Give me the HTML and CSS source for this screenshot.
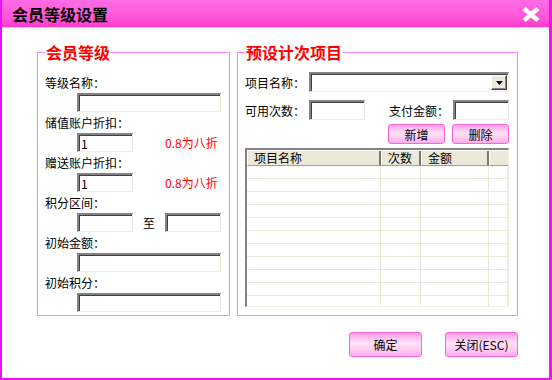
FILE: index.html
```html
<!DOCTYPE html>
<html lang="zh">
<head>
  <meta charset="UTF-8" />
  <title>会员等级设置</title>
  <link rel="stylesheet" href="styles.css">
</head>
<body>
  <div class="window">
    <div class="titlebar">
      <span class="title">会员等级设置</span>
      <svg class="close" viewBox="0 0 18 15"><path d="M2 1.5 L16 13.5 M16 1.5 L2 13.5"/></svg>
    </div>

    <div class="content">
      <div class="groups">
        <fieldset class="group group-level">
          <legend>会员等级</legend>
          <div class="lbl">等级名称：</div>
          <div class="row"><input class="inp inp-wide"></div>
          <div class="lbl">储值账户折扣：</div>
          <div class="row"><input class="inp inp-short" value="1"><span class="hint">0.8为八折</span></div>
          <div class="lbl">赠送账户折扣：</div>
          <div class="row"><input class="inp inp-short" value="1"><span class="hint">0.8为八折</span></div>
          <div class="lbl">积分区间：</div>
          <div class="row"><input class="inp inp-short"><span class="to">至</span><input class="inp inp-short"></div>
          <div class="lbl">初始金额：</div>
          <div class="row"><input class="inp inp-wide"></div>
          <div class="lbl">初始积分：</div>
          <div class="row"><input class="inp inp-wide"></div>
        </fieldset>

        <fieldset class="group group-items">
          <legend>预设计次项目</legend>
          <div class="line">
            <span class="key">项目名称：</span>
            <div class="select"><span class="drop"><svg viewBox="0 0 7 4"><path d="M0 0h7L3.5 4z"/></svg></span></div>
          </div>
          <div class="line line-2">
            <span class="key">可用次数：</span>
            <input class="inp inp-num">
            <span class="key key-pay">支付金额：</span>
            <input class="inp inp-num">
          </div>
          <div class="line line-btns">
            <button class="pbtn small">新增</button>
            <button class="pbtn small">删除</button>
          </div>
          <div class="grid">
            <div class="grid-head">
              <span class="c1">项目名称</span><span class="c2">次数</span><span class="c3">金额</span><span class="c4"></span>
            </div>
            <div class="grid-row"><span class="c1"></span><span class="c2"></span><span class="c3"></span><span class="c4"></span></div>
            <div class="grid-row"><span class="c1"></span><span class="c2"></span><span class="c3"></span><span class="c4"></span></div>
            <div class="grid-row"><span class="c1"></span><span class="c2"></span><span class="c3"></span><span class="c4"></span></div>
            <div class="grid-row"><span class="c1"></span><span class="c2"></span><span class="c3"></span><span class="c4"></span></div>
            <div class="grid-row"><span class="c1"></span><span class="c2"></span><span class="c3"></span><span class="c4"></span></div>
            <div class="grid-row"><span class="c1"></span><span class="c2"></span><span class="c3"></span><span class="c4"></span></div>
            <div class="grid-row"><span class="c1"></span><span class="c2"></span><span class="c3"></span><span class="c4"></span></div>
            <div class="grid-row"><span class="c1"></span><span class="c2"></span><span class="c3"></span><span class="c4"></span></div>
            <div class="grid-row"><span class="c1"></span><span class="c2"></span><span class="c3"></span><span class="c4"></span></div>
            <div class="grid-row"><span class="c1"></span><span class="c2"></span><span class="c3"></span><span class="c4"></span></div>
            <div class="grid-row"><span class="c1"></span><span class="c2"></span><span class="c3"></span><span class="c4"></span></div>
          </div>
        </fieldset>
      </div>

      <div class="actions">
        <button class="pbtn big">确定</button>
        <button class="pbtn big">关闭(ESC)</button>
      </div>
    </div>
  </div>
</body>
</html>
```

FILE: styles.css
```css
:root {
  --frame: #f010f8;
  --group-border: #ff80ff;
  --face: #ece9d8;
  --shadow: #848284;
  --dark: #404040;
}

body {
  margin: 0;
  font-family: "Noto Sans CJK TC", "Noto Sans CJK SC", "DejaVu Sans", sans-serif;
  font-size: 12px;
  color: #000;
  background: #fff;
}

.window {
  width: 552px;
  height: 380px;
  box-sizing: border-box;
  border-left: 2px solid var(--frame);
  border-right: 3px solid var(--frame);
  border-bottom: 2px solid var(--frame);
  background: #fff;
}

/* Title bar */
.titlebar {
  height: 27px;
  border-bottom: 1px solid #e8d4e4;
  background: linear-gradient(#ff6ce6, #ff58da 60%, #ff3ccc);
  display: flex;
  align-items: center;
  justify-content: space-between;
  padding: 0 9px 0 10px;
}

.title {
  font-size: 16px;
  font-weight: 700;
  line-height: 16px;
}

.close {
  width: 18px;
  height: 15px;
  margin-top: 1px;
}

.close path {
  stroke: #fff;
  stroke-width: 4.4;
  fill: none;
}

/* Body */
.content {
  padding: 16px 0 0 35px;
}

.groups {
  display: flex;
  gap: 7px;
  align-items: flex-start;
}

.group {
  margin: 0;
  border: 1px solid var(--group-border);
  padding: 12px 8px 4px 7px;
  min-width: 0;
  box-sizing: border-box;
  height: 272px;
}

.group legend {
  padding: 0 1px;
  color: #ff0000;
  font-size: 16px;
  font-weight: 700;
  line-height: 16px;
}

.group-level {
  width: 193px;
}

.group-items {
  width: 281px;
}

.lbl {
  height: 21px;
  line-height: 19px;
  padding-top: 1px;
  box-sizing: border-box;
}

.row {
  display: flex;
  align-items: center;
  height: 19px;
  padding-left: 32px;
}

.inp {
  box-sizing: border-box;
  height: 19px;
  margin: 0;
  padding: 0 0 0 2px;
  border-style: solid;
  border-width: 2px 1px 1px 2px;
  border-color: var(--shadow) #f1efe2 #f1efe2 var(--shadow);
  box-shadow: inset 1px 1px 0 var(--dark);
  background: #fff;
  font-family: inherit;
  font-size: 12px;
  line-height: 14px;
  color: #000;
}

.inp-wide {
  width: 144px;
}

.inp-short {
  width: 56px;
}

.hint {
  color: #ff0000;
  margin-left: 32px;
}

.to {
  width: 33px;
  text-align: center;
}

/* Right group */
.line {
  display: flex;
  align-items: center;
  height: 20px;
}

.line-2 {
  margin-top: 8px;
}

.line-btns {
  margin-top: 4px;
  justify-content: flex-end;
  gap: 7px;
}

.key {
  width: 64px;
}

.key-pay {
  margin-left: 24px;
}

.select {
  box-sizing: border-box;
  width: 200px;
  height: 20px;
  border-style: solid;
  border-width: 2px 1px 1px 2px;
  border-color: var(--shadow) #f1efe2 #f1efe2 var(--shadow);
  box-shadow: inset 1px 1px 0 var(--dark);
  background: #fff;
  display: flex;
  justify-content: flex-end;
  align-items: center;
  padding-right: 1px;
}

.drop {
  width: 16px;
  height: 15px;
  box-sizing: border-box;
  background: var(--face);
  border: 1px solid;
  border-color: #fff var(--dark) var(--dark) #fff;
  box-shadow: inset -1px -1px 0 var(--shadow);
  display: flex;
  align-items: center;
  justify-content: center;
}

.drop svg {
  width: 7px;
  height: 4px;
  fill: #000;
}

.inp-num {
  width: 56px;
  height: 20px;
}

.pbtn {
  box-sizing: border-box;
  border: 1px solid #ff66d4;
  border-radius: 3px;
  background: linear-gradient(#ff9ee8, #ffe2f8 45%, #ffc8f2 75%, #ffaaec);
  font-family: inherit;
  font-size: 12px;
  color: #000;
  padding: 0;
  margin: 0;
}

.pbtn.small {
  width: 57px;
  height: 20px;
}

/* Grid */
.grid {
  margin-top: 4px;
  width: 264px;
  height: 159px;
  box-sizing: border-box;
  border-style: solid;
  border-width: 2px 1px 1px 2px;
  border-color: var(--shadow) #f1efe2 #f1efe2 var(--shadow);
  overflow: hidden;
  background: #fff;
}

.grid-head {
  display: flex;
  height: 16px;
  background: var(--face);
  border-top: 1px solid #fff;
  box-sizing: border-box;
}

.grid-head span {
  box-sizing: border-box;
  height: 15px;
  line-height: 14px;
  padding-left: 6px;
  border-left: 1px solid #fff;
  border-right: 2px solid #787870;
  border-bottom: 1px solid #a0a090;
}

.grid-head .c4 {
  border-right: none;
}

.c1 { width: 134px; }
.c2 { width: 40px; }
.c3 { width: 68px; }
.c4 { flex: 1; }

.grid-row {
  display: flex;
  height: 13px;
}

.grid-row span {
  box-sizing: border-box;
  height: 13px;
  border-right: 1px solid var(--face);
  border-bottom: 1px solid var(--face);
}

/* Bottom buttons */
.actions {
  display: flex;
  justify-content: flex-end;
  gap: 23px;
  width: 481px;
  margin-top: 16px;
}

.pbtn.big {
  width: 73px;
  height: 25px;
}
```
